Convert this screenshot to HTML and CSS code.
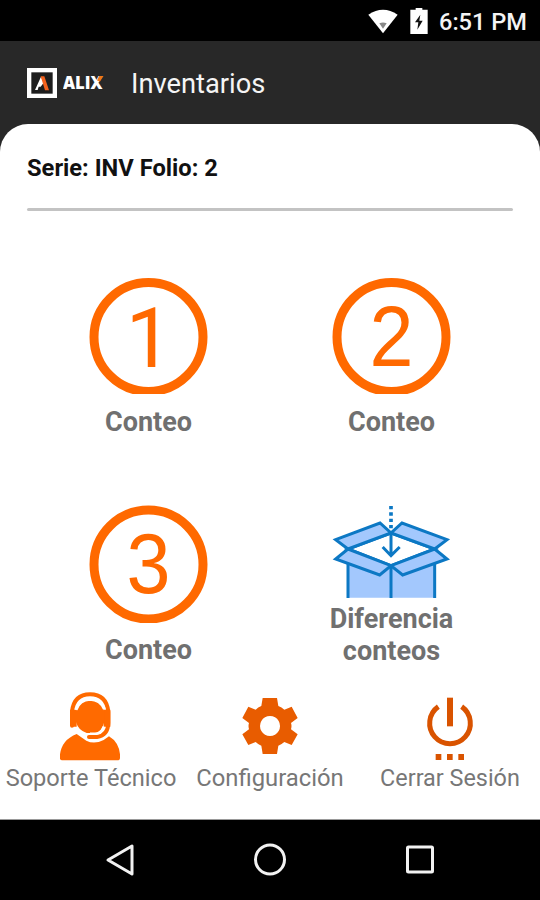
FILE: index.html
```
<!DOCTYPE html>
<html lang="es">
<head>
<meta charset="utf-8">
<title>Inventarios</title>
<link rel="stylesheet" href="styles.css">
</head>
<body>
<div class="screen">
  <div class="status">
    <svg class="wifi" width="30" height="26" viewBox="0 0 90 78"><path d="M1 20Q45-10 89 20L45 76Z" fill="#fff"/><path d="M34 46Q45 41 56 46L45 62Z" fill="#888"/></svg>
    <svg class="battery" width="18" height="26" viewBox="0 0 54 78"><path d="M17 0h20v5h16v73H1V5h16z" fill="#fff"/><path d="M31 20L15 43h10l-3 22 16-27H28z" fill="#111"/></svg>
    <span class="time">6:51 PM</span>
  </div>
  <header class="header">
    <svg class="mark" width="30" height="30" viewBox="0 0 90 90"><rect x="6.500" y="6.500" width="77" height="77" fill="#1d1d1d" stroke="#fff" stroke-width="13"/><path d="M24 66L42 26l8 18-9 12h-6l-3 10z" fill="#fff"/><path d="M41 25h11l14 42H54z" fill="#f4621e"/></svg>
    <svg class="brand" width="46" height="30" viewBox="0 0 46 30"><text class="brand-name" x="0" y="20.500" textLength="39.500" lengthAdjust="spacingAndGlyphs">ALIX</text><path d="M34 12.500L36 8h4.500l-3.500 5.500z" fill="#f07818"/></svg>
    <h1 class="title">Inventarios</h1>
  </header>
  <main class="card">
    <h2 class="serie">Serie: INV Folio: 2</h2>
    <div class="rule"></div>
    <div class="grid">
      <div class="tile">
        <svg width="120" height="117" viewBox="0.500 0 120 117"><circle cx="60" cy="60" r="54.500" class="ring"/><text class="digit one" x="60.500" y="89.500">1</text></svg>
        <span class="label">Conteo</span>
      </div>
      <div class="tile">
        <svg width="120" height="117" viewBox="0.500 0 120 117"><circle cx="60" cy="60" r="54.500" class="ring"/><text class="digit" x="64.500" y="89.500" transform="scale(.93 1)">2</text></svg>
        <span class="label">Conteo</span>
      </div>
      <div class="tile">
        <svg width="120" height="118" viewBox="0.500 0 120 118"><circle cx="60" cy="59.500" r="54.500" class="ring"/><text class="digit" x="64.500" y="88.500" transform="scale(.93 1)">3</text></svg>
        <span class="label third">Conteo</span>
      </div>
      <div class="tile">
        <svg width="120" height="94" viewBox="66 44 360 282">
          <path d="M114 180L243 225L374 180V322H114Z" fill="#a3c8fd"/>
          <g fill="#a3c8fd" stroke="#0c78c4" stroke-width="9">
            <path d="M114 218V323M374 218V323M243 226V323" fill="none"/>
            <path d="M114 176L243 128L374 176L243 226Z" fill="#fff"/>
            <path d="M77 148L210 98L243 128L114 176Z"/>
            <path d="M411 148L276 98L243 128L374 176Z"/>
            <path d="M114 176L77 206L209 254L243 226Z"/>
            <path d="M374 176L411 206L278 254L243 226Z"/>
            <path d="M243 128V196M218 170L243 196L269 170" fill="none"/>
          </g>
          <path d="M243 47v74" stroke="#0c78c4" stroke-width="11" stroke-dasharray="10 9"/>
        </svg>
        <span class="label two">Diferencia conteos</span>
      </div>
    </div>
  </main>
  <footer class="actions">
    <div class="action">
      <svg width="64" height="70" viewBox="175 35 192 210">
        <path d="M181 237V222Q187 178 231 161L260 181Q284 193 312 179L328 168Q357 185 361 222V232Q361 240 353 240H186Z" fill="#ff6a00"/>
        <path d="M217 136V94Q223 42 271 42Q320 42 326 94V128Q325 165 292 170H268" fill="none" stroke="#ff6a00" stroke-width="12" stroke-linecap="round" stroke-linejoin="round"/>
        <path d="M211 88H231V139H219Q211 137 211 130ZM312 88H332V139H312Z" fill="#ff6a00"/>
        <path d="M229 92Q240 61 271 60Q304 61 314 92V125Q307 154 286 158H261Q236 150 229 125Z" fill="#ff6a00"/>
        <path d="M229 88Q240 58 271 57Q302 58 314 86" fill="none" stroke="#fff" stroke-width="9"/>
        <path d="M312 139Q307 158 291 160H271" fill="none" stroke="#fff" stroke-width="7"/>
      </svg>
      <span class="caption support">Soporte Técnico</span>
    </div>
    <div class="action">
      <svg width="56" height="70" viewBox="157 36 168 210">
        <path fill-rule="evenodd" d="M219 54H262L266 78Q276 82 284 89L306 80L324 114L304 129Q307 138 304 148L324 163L306 195L284 186Q276 193 266 197L262 222H219L215 197Q205 193 198 186L176 195L158 163L178 148Q175 138 178 129L158 114L176 80L198 89Q205 82 215 78ZM241 108a30 30 0 1 0 .1 0Z" fill="#e85c00"/>
      </svg>
      <span class="caption">Configuración</span>
    </div>
    <div class="action">
      <svg width="50" height="70" viewBox="196 36 150 210">
        <g fill="none" stroke="#d95300"><path d="M271 53V139" stroke-width="18"/><path d="M236 80A61 61 0 1 0 306 80" stroke-width="15"/></g>
        <path d="M228 222h17v18h-17zM262 222h17v18h-17zM296 222h17v18h-17z" fill="#d95300"/>
      </svg>
      <span class="caption logout">Cerrar Sesión</span>
    </div>
  </footer>
  <nav class="nav">
    <svg width="30" height="36" viewBox="0 0 30 36"><path d="M3 18L27 4V32Z"/></svg>
    <svg width="34" height="36" viewBox="0 0 34 36"><circle cx="17" cy="17.500" r="14.500"/></svg>
    <svg width="30" height="36" viewBox="0 0 30 36"><rect x="2.500" y="5" width="25" height="25" rx="1"/></svg>
  </nav>
</div>
</body>
</html>
```
FILE: styles.css
```
* { box-sizing: border-box; }
body { margin: 0; font-family: Roboto, "Liberation Sans", sans-serif; background: #282828; }
svg { display: block; flex: none; }
h1, h2 { margin: 0; }
.screen { width: 540px; height: 900px; display: flex; flex-direction: column; overflow: hidden; }
.status { height: 41px; background: #000; display: flex; align-items: center; justify-content: flex-end; padding-right: 13px; flex: none; }
.wifi { margin-right: 12px; }
.battery { margin-right: 11px; }
.time { color: #f4f4f4; font-size: 23.600px; font-weight: 500; line-height: 28px; padding-top: 3px; }
.header { height: 83px; background: #282828; display: flex; align-items: center; padding-left: 27px; flex: none; }
.mark { margin-right: 6px; }
.brand { margin-right: 22px; }
.brand-name { font-family: "Open Sans", Roboto, sans-serif; font-size: 17px; font-weight: 800; fill: #fff; }
.title { color: #f5f5f5; font-size: 27.300px; font-weight: 400; line-height: 32px; padding-top: 2px; }
.card { background: #fff; border-radius: 28px 28px 0 0; height: 568px; padding: 28px 27px 0; flex: none; }
.serie { font-size: 23.700px; font-weight: 700; line-height: 32px; color: #111; }
.rule { height: 3px; border-radius: 2px; background: #c3c3c3; margin-top: 24px; }
.grid { display: grid; grid-template-columns: 1fr 1fr; grid-template-rows: 228px 170px; padding-top: 66px; }
.tile { display: flex; flex-direction: column; align-items: center; }
.ring { fill: none; stroke: #ff6900; stroke-width: 9; }
.digit { font-family: "Liberation Sans", sans-serif; font-size: 85px; fill: #ff6900; text-anchor: middle; }
.one { font-family: Roboto, sans-serif; font-size: 83px; }
.label { color: #707070; font-size: 27px; font-weight: 700; line-height: 32px; text-align: center; margin-top: 12px; }
.third { margin-top: 11px; }
.two { width: 150px; margin-top: 4px; }
.actions { background: #fff; display: grid; grid-template-columns: repeat(3, 180px); border-bottom: 1px solid #999; flex: 1; }
.action { display: flex; flex-direction: column; align-items: center; }
.caption { color: #777; font-size: 23.800px; line-height: 30px; white-space: nowrap; padding-top: 1px; }
.support { font-size: 23.600px; padding-left: 2px; }
.logout { font-size: 23.400px; }
.nav { height: 80px; background: #000; display: flex; align-items: center; justify-content: space-between; padding: 0 105px; flex: none; }
.nav svg { fill: none; stroke: #f2f2f2; stroke-width: 3; stroke-linejoin: round; }
```
